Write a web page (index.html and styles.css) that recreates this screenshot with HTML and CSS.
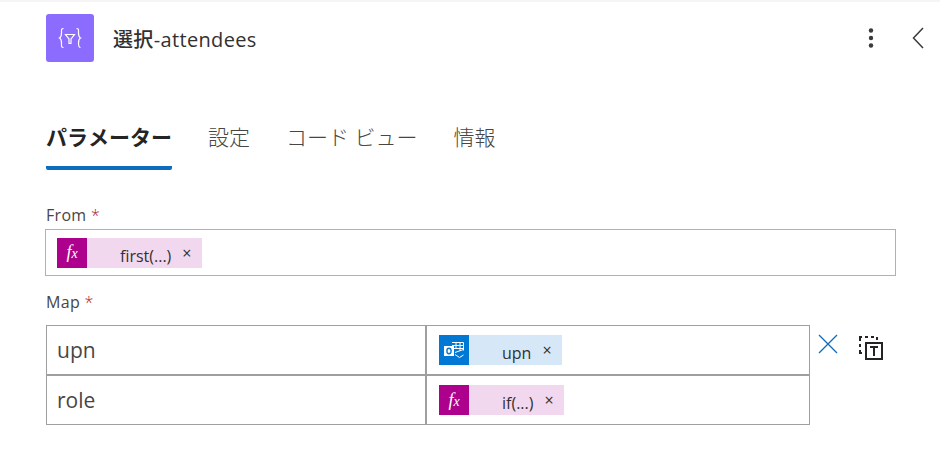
FILE: index.html
```html
<!DOCTYPE html>
<html lang="ja">
<head>
    <meta charset="UTF-8">
    <title>選択-attendees</title>
    <link rel="stylesheet" href="styles.css">
</head>
<body>
    <!-- Header -->
    <header class="header">
        <div class="action-icon">
            <svg width="30" height="30" viewBox="0 0 30 30" fill="none" stroke="#fff" stroke-width="1.2">
                <path d="M8.500 5.500c-2.500 0-2 1.500-2 4.500s-.3 4.200-2 5c1.700.8 2 2 2 5s-.5 4.500 2 4.500"/>
                <path d="M21.500 5.500c2.500 0 2 1.500 2 4.500s.3 4.200 2 5c-1.700.8-2 2-2 5s.5 4.500 2 4.500"/>
                <path d="M10.500 11.500h9l-3.500 4.500v4.500h-2V16z"/>
            </svg>
        </div>
        <h1 class="title">選択-attendees</h1>
        <div class="header-actions">
            <svg width="6" height="20" viewBox="0 0 6 20" fill="#3b3a39">
                <circle cx="3" cy="2.500" r="2.200"/>
                <circle cx="3" cy="10" r="2.200"/>
                <circle cx="3" cy="17.500" r="2.200"/>
            </svg>
            <svg width="12" height="22" viewBox="0 0 12 22" fill="none" stroke="#3b3a39" stroke-width="1.500">
                <path d="M11 1 1.500 11 11 21"/>
            </svg>
        </div>
    </header>

    <!-- Tabs -->
    <nav class="tabs">
        <span class="tab active">パラメーター</span>
        <span class="tab">設定</span>
        <span class="tab">コード ビュー</span>
        <span class="tab">情報</span>
    </nav>

    <!-- From -->
    <label class="field-label">From <span class="required">*</span></label>
    <div class="from-box">
        <span class="chip chip-fx">
            <span class="chip-icon fx-icon"><i>f</i><i>x</i></span>
            <span class="chip-text">first(...)</span>
            <span class="chip-close">×</span>
        </span>
    </div>

    <!-- Map -->
    <label class="field-label map-label">Map <span class="required">*</span></label>
    <div class="map-area">
        <div class="map-table">
            <div class="map-key map-first">upn</div>
            <div class="map-value map-first">
                <span class="chip chip-outlook">
                    <span class="chip-icon outlook-icon">
                        <svg width="20" height="17" viewBox="0 0 20 17" fill="none" stroke="#fff" stroke-width="1">
                            <path d="M8 .5h11.500v8"/>
                            <path d="M12 .5v6M16 .5v8M8 3.500h11.500M8 6.500h11.500"/>
                            <path d="M11 10.500l8.500-3M11 12.500l4.500 3 4-2.500"/>
                            <rect x="0" y="4" width="10" height="10" fill="#fff" stroke="none"/>
                            <ellipse cx="5" cy="9" rx="2.100" ry="2.700" stroke="#0078d4" stroke-width="1.400"/>
                        </svg>
                    </span>
                    <span class="chip-text">upn</span>
                    <span class="chip-close">×</span>
                </span>
            </div>
            <div class="map-key">role</div>
            <div class="map-value">
                <span class="chip chip-fx">
                    <span class="chip-icon fx-icon"><i>f</i><i>x</i></span>
                    <span class="chip-text">if(...)</span>
                    <span class="chip-close">×</span>
                </span>
            </div>
        </div>
        <div class="map-actions">
            <svg class="delete-icon" width="20" height="20" viewBox="0 0 20 20" fill="none" stroke="#0f6cbd" stroke-width="1.300">
                <path d="M1 1 19 19M19 1 1 19"/>
            </svg>
            <svg class="text-mode-icon" width="26" height="26" viewBox="0 0 26 26" fill="none" stroke="#252423" stroke-width="2">
                <path d="M2 6V2h2M7 2h3M13 2h3M19 5V2M2 9v3M2 15v3h2"/>
                <rect x="8" y="8" width="16" height="16"/>
                <path d="M12 12h8M16 12v9"/>
            </svg>
        </div>
    </div>
</body>
</html>
```

FILE: styles.css
```css
/* Global Styles */
* {
    margin: 0;
    padding: 0;
    box-sizing: border-box;
}

body {
    width: 940px;
    height: 452px;
    overflow: hidden;
    background: #fff;
    color: #323130;
    font-family: 'Open Sans', 'Noto Sans CJK JP', sans-serif;
    border-top: 2px solid #f5f5f5;
    padding-left: 46px;
}

/* Header */
.header {
    display: flex;
    align-items: center;
    height: 48px;
    margin-top: 12px;
}

.action-icon {
    width: 48px;
    height: 48px;
    background: #8c6cff;
    border-radius: 3px;
    display: flex;
    align-items: center;
    justify-content: center;
}

.title {
    margin-left: 19px;
    font-size: 20px;
    font-weight: 500;
    letter-spacing: 0.35px;
    color: #323130;
}

.header-actions {
    display: flex;
    align-items: center;
    gap: 38px;
    margin-right: 16px;
    margin-left: auto;
}

/* Tabs */
.tabs {
    display: flex;
    gap: 36px;
    margin-top: 46px;
    height: 62px;
    font-kerning: none;
}

.tab {
    font-size: 21px;
    line-height: 30px;
    height: 62px;
    padding-top: 14px;
    color: #484644;
    font-weight: 300;
}

.tab.active {
    color: #242424;
    font-weight: 700;
    border-bottom: 4px solid #0f6cbd;
    border-radius: 0 0 2px 2px;
}

/* Fields */
.field-label {
    display: block;
    margin-top: 34px;
    font-size: 16px;
    line-height: 22px;
    letter-spacing: 0.3px;
    color: #484644;
}

.map-label {
    margin-top: 15px;
}

.required {
    color: #a4262c;
    font-weight: 300;
}

.from-box {
    display: flex;
    align-items: center;
    width: 851px;
    height: 47px;
    margin-left: -1px;
    margin-top: 3px;
    padding-left: 11px;
    border: 1px solid #b3b0ad;
}

/* Chips */
.chip {
    display: inline-flex;
    align-items: center;
    height: 30px;
    font-size: 16px;
    color: #323130;
}

.chip-fx {
    background: #f2d8ee;
}

.chip-outlook {
    background: #d6e8f8;
}

.chip-icon {
    width: 30px;
    height: 30px;
    display: flex;
    align-items: center;
    justify-content: center;
    flex-shrink: 0;
}

.fx-icon {
    background: #ad008c;
    color: #fff;
    font-family: 'Liberation Serif', serif;
    font-size: 18px;
}

.fx-icon i + i {
    font-size: 14px;
    margin-top: 3px;
}

.outlook-icon {
    background: #0078d4;
}

.chip-text {
    margin-left: 33px;
    margin-top: 6px;
}

.chip-close {
    margin-left: 11px;
    margin-right: 10px;
    font-size: 16px;
}

/* Map table */
.map-area {
    display: flex;
    margin-top: 12px;
}

.map-table {
    display: grid;
    grid-template-columns: 380px 383px;
    grid-template-rows: 50px 49px;
    width: 764px;
    border-top: 1px solid #a19f9d;
    border-left: 1px solid #a19f9d;
}

.map-key,
.map-value {
    display: flex;
    align-items: center;
    border-right: 1px solid #a19f9d;
    border-bottom: 1px solid #a19f9d;
}

.map-first {
    border-bottom-width: 2px;
}

.map-key {
    padding-left: 10px;
    font-size: 21px;
    color: #484644;
    border-right-width: 2px;
}

.map-value {
    padding-left: 12px;
}

.map-actions {
    display: flex;
    align-items: flex-start;
    gap: 20px;
    margin-left: 8px;
    padding-top: 9px;
}

.text-mode-icon {
    margin-top: 1px;
}
```
